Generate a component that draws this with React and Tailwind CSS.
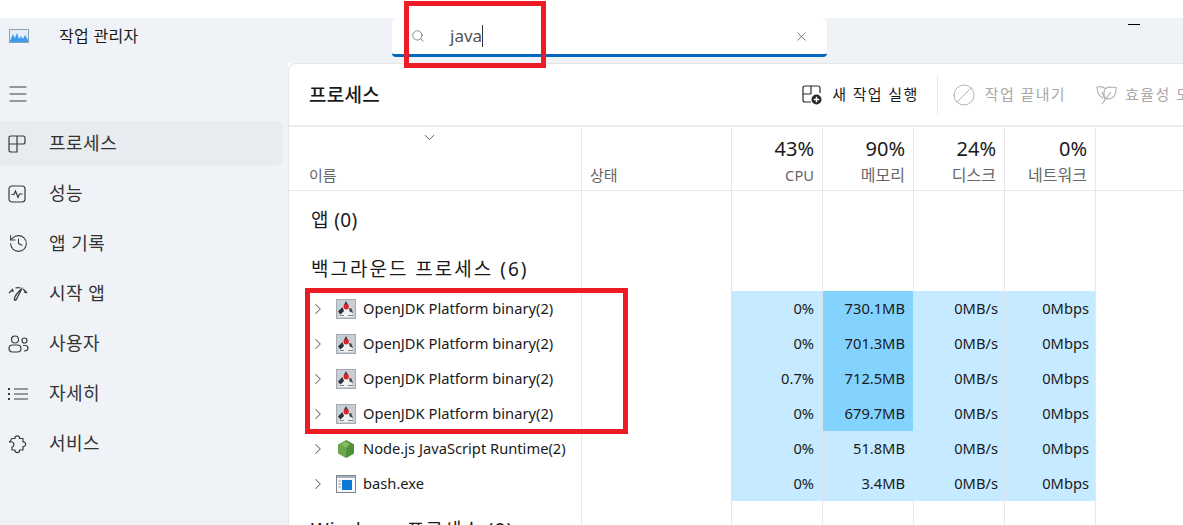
import { Search, X, Menu, ChevronDown, ChevronRight, History, Ban } from 'lucide-react'

const sans = "font-['Noto_Sans','Noto_Sans_CJK_KR',sans-serif]"

function AppLogo() {
  return (
    <svg width="20" height="14" viewBox="0 0 20 14">
      <rect x="0.5" y="0.5" width="19" height="13" fill="#e3eef8" stroke="#8aa0b5" />
      <path d="M1 12 L4 5 L6 9 L8 4 L10 10 L12 7 L14 10 L16 6 L19 11 V13 H1 Z" fill="#3d9bf0" />
    </svg>
  )
}

function ProcessIcon() {
  return (
    <svg width="18" height="18" viewBox="0 0 18 18" fill="none" stroke="#3a3a3a" strokeWidth="1.2">
      <path d="M1 9 V3 Q1 1 3 1 H15 Q17 1 17 3 V7 Q17 9 15 9 H9 V17 H3 Q1 17 1 15 Z M1 9 H9 M9 1 V9" />
    </svg>
  )
}

function PerfIcon() {
  return (
    <svg width="18" height="18" viewBox="0 0 18 18" fill="none" stroke="#3a3a3a" strokeWidth="1.2">
      <rect x="1" y="1" width="16" height="16" rx="3" />
      <path d="M3.5 9.5 H6 L7.5 6 L10 12.5 L11.5 9 H14.5" />
    </svg>
  )
}

function StartupIcon() {
  return (
    <svg width="20" height="16" viewBox="0 0 20 16" fill="none" stroke="#3a3a3a" strokeWidth="1.3">
      <path d="M1 7 L4.5 3.5 L5 6 M7.5 2 Q10 1.2 12.5 2 M15 3 L19 7 L16 6" />
      <path d="M13.5 3 C12.5 6 10.5 9 9 12 C8 15 6 15 6.5 12.5 C7 10 10 6 13.5 3 Z" />
    </svg>
  )
}

function UsersIcon() {
  return (
    <svg width="21" height="18" viewBox="0 0 21 18" fill="none" stroke="#3a3a3a" strokeWidth="1.2">
      <circle cx="7" cy="4.5" r="3.5" />
      <circle cx="16.5" cy="5.5" r="2.5" />
      <rect x="1" y="10" width="12" height="7" rx="3.5" />
      <path d="M15 10.5 H17 Q20 10.5 20 13 Q20 16 16 16" />
    </svg>
  )
}

function DetailsIcon() {
  return (
    <svg width="20" height="14" viewBox="0 0 20 14" fill="none" stroke="#3a3a3a" strokeWidth="1.2">
      <path d="M6 2 H20 M6 7 H20 M6 12 H20" />
      <path d="M1 1 V3 M1 6 V8 M1 11 V13" strokeWidth="2" />
    </svg>
  )
}

function ServicesIcon() {
  return (
    <svg width="19" height="20" viewBox="0 0 19 20" fill="none" stroke="#3a3a3a" strokeWidth="1.2" strokeLinejoin="round">
      <path d="M4 4.5 H7 C6.5 1 12 1 11.5 4.5 H15 V8 C18.5 7.5 18.5 13 15 12.5 V16 H11.5 C12 19.5 6.5 19.5 7 16 H4 V13 C6.5 13 6.5 8 4 8 C2.5 8 1.5 8 1.5 8 Q2.5 7 4 4.5 Z" />
    </svg>
  )
}

function NewTaskIcon() {
  return (
    <svg width="20" height="20" viewBox="0 0 20 20" fill="none" stroke="#2a2a2a" strokeWidth="1.2">
      <path d="M1 9 V3 Q1 1 3 1 H16 Q18 1 18 3 V8 M1 9 H9 M9 1 V9 M1 9 V15 Q1 17 3 17 H9" />
      <circle cx="14.5" cy="14.5" r="5" fill="#2a2a2a" stroke="none" />
      <path d="M14.5 11.8 V17.2 M11.8 14.5 H17.2" stroke="#fff" strokeWidth="1.4" />
    </svg>
  )
}

function LeafIcon() {
  return (
    <svg width="21" height="20" viewBox="0 0 21 20" fill="none" stroke="#b4b4b4" strokeWidth="1.2">
      <path d="M7 13 Q1.5 11 1 2 Q6 1 9.5 3.5" />
      <path d="M9.5 3.5 Q13 1.5 20 2.5 Q20.5 10 16 13 Q12 15 9 12.5 Q6.5 8 9.5 3.5 Z" />
      <path d="M6 19 L15 7 M9 14.5 L6 7" />
    </svg>
  )
}

function JavaIcon() {
  return (
    <svg width="20" height="20" viewBox="0 0 20 20">
      <rect x="0.5" y="0.5" width="19" height="19" fill="#c9ced4" stroke="#a4abb3" />
      <path d="M10 2 L12.5 6 L16 13 L17 18 H3 L4 14 L7.5 6 Z" fill="#f0f1f2" />
      <path d="M10 2 L12.5 6.5 H7.5 Z" fill="#3a3d42" />
      <path d="M6.5 8 L2 12.5 L4.5 15.5 L8 12 Z" fill="#2d3136" />
      <path d="M13 9 L15.5 9.5 L17 14 L13.5 12.5 Z" fill="#4a4e54" />
      <path d="M4 16 H8 V17 H4 Z M12 16 H17 V17 H12 Z" fill="#7c8288" />
      <circle cx="10.2" cy="7.8" r="2.7" fill="#d8232a" />
    </svg>
  )
}

function NodeIcon() {
  return (
    <svg width="20" height="20" viewBox="0 0 20 20">
      <path d="M10 1 L18 5.5 V14.5 L10 19 L2 14.5 V5.5 Z" fill="#6aa84f" />
      <path d="M10 1 L18 5.5 V14.5 L10 19 Z" fill="#4f8f3a" />
      <path d="M5 5 L10 2.5 L14 5 L10 9 Z" fill="#84bd62" />
    </svg>
  )
}

function BashIcon() {
  return (
    <svg width="20" height="18" viewBox="0 0 20 18">
      <rect x="0.5" y="0.5" width="19" height="17" fill="#f6f8fa" stroke="#7d8690" />
      <rect x="1" y="1" width="18" height="2" fill="#a8b2bc" />
      <rect x="6" y="5" width="10" height="10" fill="#0a78d7" />
      <path d="M2.5 6 H5 M2.5 9 H5 M2.5 12 H5" stroke="#8a94a0" />
    </svg>
  )
}

const navItems = [
  { label: '프로세스', icon: <ProcessIcon />, active: true },
  { label: '성능', icon: <PerfIcon /> },
  { label: '앱 기록', icon: <History size={21} strokeWidth={1.2} color="#3a3a3a" /> },
  { label: '시작 앱', icon: <StartupIcon /> },
  { label: '사용자', icon: <UsersIcon /> },
  { label: '자세히', icon: <DetailsIcon /> },
  { label: '서비스', icon: <ServicesIcon /> },
]

const rows = [
  { name: 'OpenJDK Platform binary(2)', icon: <JavaIcon />, cpu: '0%', mem: '730.1MB', hot: true },
  { name: 'OpenJDK Platform binary(2)', icon: <JavaIcon />, cpu: '0%', mem: '701.3MB', hot: true },
  { name: 'OpenJDK Platform binary(2)', icon: <JavaIcon />, cpu: '0.7%', mem: '712.5MB', hot: true },
  { name: 'OpenJDK Platform binary(2)', icon: <JavaIcon />, cpu: '0%', mem: '679.7MB', hot: true },
  { name: 'Node.js JavaScript Runtime(2)', icon: <NodeIcon />, cpu: '0%', mem: '51.8MB' },
  { name: 'bash.exe', icon: <BashIcon />, cpu: '0%', mem: '3.4MB' },
]

const cols = 'grid grid-cols-[292px_150px_91px_91px_91px_91px_1fr]'
const line = 'border-l border-[#e8e8e8]'

function Stat({ pct, label, small }) {
  return (
    <div className={`${line} flex flex-col items-end pr-2 pt-[8px]`}>
      <span className="text-[20px] leading-[27px] text-[#1a1a1a]">{pct}</span>
      <span className={`mt-[2px] leading-[22px] text-[#666] ${small ? 'text-[14.7px]' : 'text-[16px]'}`}>{label}</span>
    </div>
  )
}

function GroupRow({ title, height, titleClass }) {
  return (
    <div className={`${cols} ${height}`}>
      <div className={`flex items-end whitespace-nowrap pl-[22px] text-[19px] leading-[26px] text-[#1a1a1a] ${titleClass}`}>
        {title}
      </div>
      <div className={line} />
      <div className={line} />
      <div className={line} />
      <div className={line} />
      <div className={line} />
      <div className={line} />
    </div>
  )
}

function ProcessRow({ row }) {
  const cell = 'flex items-center justify-end pr-[6px] border-l border-[#dbe3e8]'
  return (
    <div className={`${cols} h-[35px] text-[14.7px] text-[#1a1a1a]`}>
      <div className="flex items-center pl-[20px]">
        <ChevronRight size={18} strokeWidth={1.4} color="#666" />
        <span className="ml-[9px] flex w-[20px] justify-center">{row.icon}</span>
        <span className="ml-[7px] whitespace-nowrap">{row.name}</span>
      </div>
      <div className={line} />
      <div className={`${cell} bg-[#c6eaff] pr-[8px]`}>{row.cpu}</div>
      <div className={`${cell} ${row.hot ? 'bg-[#84d3ff]' : 'bg-[#c6eaff]'} pr-[8px]`}>{row.mem}</div>
      <div className={`${cell} bg-[#c6eaff]`}>0MB/s</div>
      <div className={`${cell} bg-[#c6eaff]`}>0Mbps</div>
      <div className={line} />
    </div>
  )
}

export default function App() {
  return (
    <div className={`relative h-[525px] w-[1183px] overflow-hidden bg-white ${sans}`}>
      <div className="h-[18px] bg-white" />

      {/* title bar */}
      <div className="relative flex h-[45px] bg-[#eff3f7]">
        <div className="flex h-[35px] w-[392px] shrink-0 items-center pl-[9px]">
          <AppLogo />
          <span className="ml-[30px] text-[16px] tracking-[0.3px] text-[#1a1a1a]">작업 관리자</span>
        </div>
        <div className="flex h-[39px] w-[435px] items-center rounded-t-md rounded-b-sm border-b-[3px] border-[#0067c0] bg-white pl-[19px] pr-[18px]">
          <Search size={14} strokeWidth={1.3} color="#666" />
          <span className="ml-[25px] text-[17px] text-[#555]">java</span>
          <span className="h-[22px] w-[1px] bg-[#333]" />
          <X size={15} strokeWidth={1.2} color="#555" className="ml-auto" />
        </div>
        <div className="absolute left-[1128px] top-[6px] h-[1px] w-[12px] bg-black" />
      </div>

      <div className="flex h-[462px]">
        {/* side nav */}
        <nav className="flex w-[288px] shrink-0 flex-col bg-[#eff3f7] pr-[5px]">
          <div className="flex h-[58px] items-center pl-[6px] pt-[4px]">
            <Menu size={24} strokeWidth={1} color="#3a3a3a" />
          </div>
          <div className="flex flex-col gap-[5px]">
            {navItems.map((item) => (
              <div
                key={item.label}
                className={`flex h-[45px] items-center rounded-r-lg ${item.active ? 'bg-[#e8ebef]' : ''}`}
              >
                <span className="flex w-[49px] justify-start pl-[8px]">{item.icon}</span>
                <span className="text-[18px] tracking-[0.5px] text-[#333]">{item.label}</span>
              </div>
            ))}
          </div>
        </nav>

        {/* main panel */}
        <main className="min-w-0 flex-1 overflow-hidden rounded-tl-lg border-l border-t border-[#e6e6e6] bg-white">
          <div className="flex h-[63px] items-center border-b-2 border-[#ececec] pl-[20px]">
            <h1 className="w-[72px] whitespace-nowrap pt-[2px] text-[19px] font-medium tracking-[0.3px] text-[#1a1a1a]">프로세스</h1>
            <div className="ml-[422px] flex items-center whitespace-nowrap text-[15px]">
              <NewTaskIcon />
              <span className="ml-[10px] tracking-[1.4px] text-[#1a1a1a]">새 작업 실행</span>
              <span className="ml-[18px] h-[40px] w-[1px] bg-[#e8e8e8]" />
              <Ban size={24} strokeWidth={1} color="#b4b4b4" className="ml-[14px] scale-x-[-1]" />
              <span className="ml-[9px] tracking-[1.4px] text-[#a8a8a8]">작업 끝내기</span>
              <span className="ml-[30px]"><LeafIcon /></span>
              <span className="ml-[8px] tracking-[1.4px] text-[#a8a8a8]">효율성 모드</span>
            </div>
          </div>

          <div className={`${cols} h-[64px] border-b border-[#e8e8e8]`}>
            <div className="relative flex items-end pb-[4px] pl-[20px] text-[15px] leading-[22px] text-[#666]">
              이름
              <ChevronDown size={17} strokeWidth={1.3} color="#555" className="absolute left-[132px] top-[2px]" />
            </div>
            <div className={`${line} flex items-end pb-[4px] pl-[8px] text-[15px] leading-[22px] text-[#666]`}>상태</div>
            <Stat pct="43%" label="CPU" small />
            <Stat pct="90%" label="메모리" />
            <Stat pct="24%" label="디스크" />
            <Stat pct="0%" label="네트워크" />
            <div className={line} />
          </div>

          <GroupRow title="앱 (0)" height="h-[54px]" titleClass="pb-[12px] tracking-[0.4px]" />
          <GroupRow title="백그라운드 프로세스 (6)" height="h-[46px]" titleClass="pb-[9px] tracking-[2px]" />
          {rows.map((row, i) => (
            <ProcessRow key={i} row={row} />
          ))}
          <GroupRow title="Windows 프로세스 (8)" height="h-[46px]" titleClass="pb-[4px] tracking-[1.2px]" />
        </main>
      </div>

      {/* red annotation boxes */}
      <div className="absolute left-[404px] top-[1px] h-[67px] w-[142px] border-[5px] border-[#ed1c24]" />
      <div className="absolute left-[305px] top-[288px] h-[146px] w-[323px] border-[5px] border-[#ed1c24]" />
    </div>
  )
}
